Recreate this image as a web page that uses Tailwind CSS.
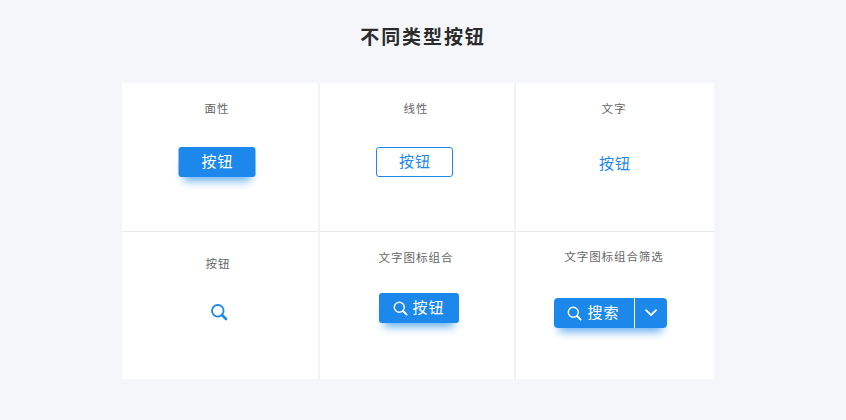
<!DOCTYPE html>
<html lang="zh-CN">
<head>
    <meta charset="UTF-8">
    <meta name="viewport" content="width=device-width, initial-scale=1.0">
    <title>不同类型按钮</title>
    <script src="https://cdn.jsdelivr.net/npm/@tailwindcss/browser@4"></script>
</head>
<body class="bg-[#f5f6fa] font-['Noto_Sans_CJK_SC','Noto_Sans',sans-serif]">
    <div class="w-[846px] h-[420px] overflow-hidden">
        <!-- Title -->
        <h1 class="mt-[21px] h-[30px] leading-[30px] text-center text-[19px] font-bold tracking-[1.9px] text-[#2b2b2b]">不同类型按钮</h1>

        <!-- Card grid -->
        <div class="mt-[32px] ml-[122px] w-[592px] h-[296px] bg-white grid grid-cols-[196px_2px_194px_2px_198px] grid-rows-[148px_1px_147px]">
            <!-- 面性 -->
            <div class="flex flex-col items-center pt-[16px]">
                <p class="h-[18px] leading-[18px] text-[11.5px] tracking-[1px] text-[#666] translate-x-[-3px]">面性</p>
                <button class="mt-[30px] w-[77px] h-[30px] -translate-x-[3.5px] pl-[2px] pb-[2px] rounded-[3px] bg-[#1c88ec] text-white text-[15px] tracking-[1px] leading-[28px] shadow-[0_9px_9px_-5px_rgba(28,136,236,0.65)]">按钮</button>
            </div>
            <div class="bg-[#f1f2f6] row-span-3"></div>

            <!-- 线性 -->
            <div class="flex flex-col items-center pt-[16px]">
                <p class="h-[18px] leading-[18px] text-[11.5px] tracking-[1px] text-[#666] translate-x-[-1px]">线性</p>
                <button class="mt-[30px] w-[77px] h-[30px] translate-x-[-3px] pl-[2px] pb-[2px] rounded-[3px] border border-[#1c88ec] bg-white text-[#1c88ec] text-[15px] tracking-[1px] leading-[26px]">按钮</button>
            </div>
            <div class="bg-[#f1f2f6] row-span-3"></div>

            <!-- 文字 -->
            <div class="flex flex-col items-center pt-[16px]">
                <p class="h-[18px] leading-[18px] text-[11.5px] tracking-[1px] text-[#666] translate-x-[-1px]">文字</p>
                <p class="mt-[35px] h-[22px] leading-[22px] text-[#1c88ec] text-[15px] tracking-[1px]">按钮</p>
            </div>

            <!-- Row divider -->
            <div class="bg-[#e8e9ee]"></div>
            <div class="bg-[#e8e9ee]"></div>
            <div class="bg-[#e8e9ee]"></div>

            <!-- 按钮 (icon only) -->
            <div class="flex flex-col items-center pt-[22px]">
                <p class="h-[18px] leading-[18px] text-[11.5px] tracking-[1px] text-[#666] translate-x-[-2px]">按钮</p>
                <svg class="mt-[31px] -translate-x-[1px] text-[#1c88ec]" width="18" height="18" viewBox="0 0 18 18" fill="none" stroke="currentColor" stroke-linecap="round">
                    <circle cx="7.8" cy="7.8" r="5.8" stroke-width="1.8"/>
                    <path d="M12 12l4 4" stroke-width="2.6"/>
                </svg>
            </div>

            <!-- 文字图标组合 -->
            <div class="flex flex-col items-center pt-[16px]">
                <p class="h-[18px] leading-[18px] text-[11.5px] tracking-[1px] text-[#666] translate-x-[-1px]">文字图标组合</p>
                <button class="mt-[27px] w-[80px] h-[30px] translate-x-[2px] rounded-[3px] bg-[#1c88ec] text-white text-[15px] tracking-[1px] flex items-center justify-center gap-[4px] shadow-[0_9px_9px_-5px_rgba(28,136,236,0.65)]">
                    <svg width="15" height="15" viewBox="0 0 15 15" fill="none" stroke="currentColor" stroke-linecap="round">
                        <circle cx="6.3" cy="6.3" r="5" stroke-width="1.4"/>
                        <path d="M10 10l3.6 3.6" stroke-width="1.9"/>
                    </svg>
                    <span class="mb-[2px]">按钮</span>
                </button>
            </div>

            <!-- 文字图标组合筛选 -->
            <div class="flex flex-col items-center pt-[15px]">
                <p class="h-[18px] leading-[18px] text-[11.5px] tracking-[0.9px] text-[#666] translate-x-[-1px]">文字图标组合筛选</p>
                <div class="mt-[33px] flex h-[30px] translate-x-[-5px] rounded-[4px] bg-[#1c88ec] text-white shadow-[0_9px_9px_-5px_rgba(28,136,236,0.65)]">
                    <button class="w-[80px] flex items-center justify-center gap-[5px] text-[15px] tracking-[1px]">
                        <svg width="15" height="15" viewBox="0 0 15 15" fill="none" stroke="currentColor" stroke-linecap="round">
                            <circle cx="6.3" cy="6.3" r="5" stroke-width="1.4"/>
                            <path d="M10 10l3.6 3.6" stroke-width="1.9"/>
                        </svg>
                        <span class="mb-[2px]">搜索</span>
                    </button>
                    <div class="w-px bg-white"></div>
                    <button class="w-[32px] flex items-center justify-center">
                        <svg width="12" height="8" viewBox="0 0 12 8" fill="none" stroke="currentColor" stroke-width="1.8" stroke-linecap="round" stroke-linejoin="round">
                            <path d="M1 1.2l5 5 5-5"/>
                        </svg>
                    </button>
                </div>
            </div>
        </div>
    </div>
</body>
</html>
